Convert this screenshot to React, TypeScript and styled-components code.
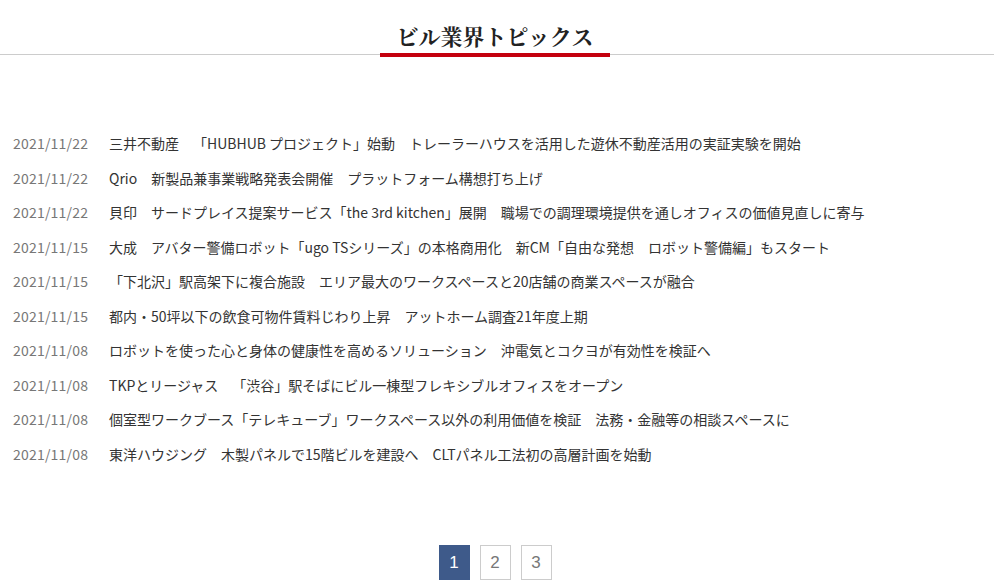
import React from "react";
import styled, { createGlobalStyle } from "styled-components";

const Global = createGlobalStyle`
  html, body { margin: 0; padding: 0; background: #fff; }
  body {
    font-family: "Noto Sans CJK JP", "Noto Sans", sans-serif;
    text-spacing-trim: space-all;
  }
`;

const Page = styled.div`
  width: 994px;
  height: 581px;
  overflow: hidden;
`;

const Header = styled.header`
  display: flex;
  justify-content: center;
  padding: 20px 4px 0 0;
  border-bottom: 1px solid #cccccc;
`;

const Title = styled.h2`
  margin: 0 0 -3px;
  padding: 0 17px 1px;
  font-family: "Noto Serif CJK JP", "Liberation Serif", "Noto Sans CJK JP", serif;
  font-size: 22px;
  font-weight: 700;
  line-height: 32px;
  color: #222;
  border-bottom: 4px solid #c4000e;
`;

const List = styled.ul`
  list-style: none;
  margin: 71px 0 0;
  padding: 0 0 0 13px;
`;

const Row = styled.li`
  display: flex;
  padding: 7px 0;
  line-height: 20.5px;
  font-size: 14px;
`;

const Date = styled.span`
  width: 96px;
  flex: none;
  color: #777;
  letter-spacing: 0.2px;
`;

const Headline = styled.a`
  color: #333;
  text-decoration: none;
  white-space: nowrap;
  text-spacing-trim: space-all;
`;

const Pager = styled.nav`
  display: flex;
  justify-content: center;
  gap: 10px;
  margin-top: 74px;
  padding-right: 4px;
`;

const PageBox = styled.span<{ $active?: boolean }>`
  width: 31px;
  height: 35px;
  box-sizing: border-box;
  display: flex;
  align-items: center;
  justify-content: center;
  font-family: "Liberation Sans", Arial, sans-serif;
  font-size: 17px;
  color: ${(p) => (p.$active ? "#fff" : "#777")};
  background: ${(p) => (p.$active ? "#3e5a8a" : "#fff")};
  border: 1px solid ${(p) => (p.$active ? "#3e5a8a" : "#cccccc")};
`;

const items: [string, string][] = [
  ["2021/11/22", "三井不動産　「HUBHUB プロジェクト」始動　トレーラーハウスを活用した遊休不動産活用の実証実験を開始"],
  ["2021/11/22", "Qrio　新製品兼事業戦略発表会開催　プラットフォーム構想打ち上げ"],
  ["2021/11/22", "貝印　サードプレイス提案サービス「the 3rd kitchen」展開　職場での調理環境提供を通しオフィスの価値見直しに寄与"],
  ["2021/11/15", "大成　アバター警備ロボット「ugo TSシリーズ」の本格商用化　新CM「自由な発想　ロボット警備編」もスタート"],
  ["2021/11/15", "「下北沢」駅高架下に複合施設　エリア最大のワークスペースと20店舗の商業スペースが融合"],
  ["2021/11/15", "都内・50坪以下の飲食可物件賃料じわり上昇　アットホーム調査21年度上期"],
  ["2021/11/08", "ロボットを使った心と身体の健康性を高めるソリューション　沖電気とコクヨが有効性を検証へ"],
  ["2021/11/08", "TKPとリージャス　「渋谷」駅そばにビル一棟型フレキシブルオフィスをオープン"],
  ["2021/11/08", "個室型ワークブース「テレキューブ」ワークスペース以外の利用価値を検証　法務・金融等の相談スペースに"],
  ["2021/11/08", "東洋ハウジング　木製パネルで15階ビルを建設へ　CLTパネル工法初の高層計画を始動"],
];

export default function App() {
  return (
    <Page>
      <Global />
      <Header>
        <Title>ビル業界トピックス</Title>
      </Header>
      <List>
        {items.map(([d, t], i) => (
          <Row key={i}>
            <Date>{d}</Date>
            <Headline href="#">{t}</Headline>
          </Row>
        ))}
      </List>
      <Pager>
        <PageBox $active>1</PageBox>
        <PageBox>2</PageBox>
        <PageBox>3</PageBox>
      </Pager>
    </Page>
  );
}
